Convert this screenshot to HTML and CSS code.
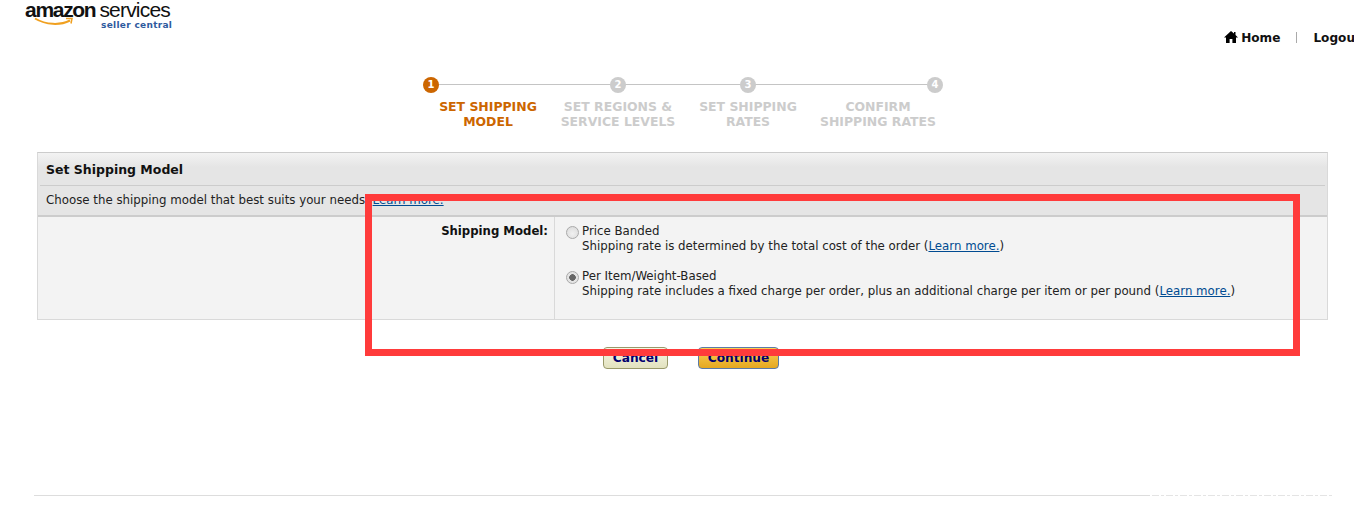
FILE: index.html
```html
<!DOCTYPE html>
<html lang="en">
<head>
<meta charset="utf-8">
<title>Set Shipping Model</title>
<link rel="stylesheet" href="styles.css">
</head>
<body>
<header class="top">
  <div class="logo">
    <div class="logo-main"><span class="logo-amazon">amazon</span><span class="logo-services">services</span></div>
    <svg class="logo-smile" width="50" height="10" viewBox="0 0 50 10"><path d="M1 1.5C12 8 26 8.6 36 3.5" fill="none" stroke="#f0a020" stroke-width="2"/><path d="M32 1.5L38 1.5 37 6.5" fill="none" stroke="#f0a020" stroke-width="1.5"/></svg>
    <div class="logo-sub">seller central</div>
  </div>
  <nav class="nav">
    <a class="nav-link nav-home"><svg class="nav-icon" width="14" height="12" viewBox="0 0 14 12"><path d="M7 0L0 6.5h2V12h3.6V8h2.8v4H12V6.5h2L11.5 4V1H10v1.6z" fill="#000"/></svg>Home</a>
    <span class="nav-sep"></span>
    <a class="nav-link">Logou</a>
  </nav>
</header>

<ol class="steps">
  <li class="step step-active"><span class="dot">1</span><span class="step-label">SET SHIPPING<br>MODEL</span></li>
  <li class="step"><span class="dot">2</span><span class="step-label">SET REGIONS &amp;<br>SERVICE LEVELS</span></li>
  <li class="step"><span class="dot">3</span><span class="step-label">SET SHIPPING<br>RATES</span></li>
  <li class="step"><span class="dot">4</span><span class="step-label">CONFIRM<br>SHIPPING RATES</span></li>
</ol>

<section class="panel">
  <div class="panel-head">
    <h1 class="panel-title">Set Shipping Model</h1>
    <p class="panel-intro">Choose the shipping model that best suits your needs. <a class="link">Learn more.</a></p>
  </div>
  <div class="panel-body">
    <div class="field-label">Shipping Model:</div>
    <div class="field-options">
      <label class="option">
        <span class="radio"></span>
        <span class="option-text">Price Banded<br>Shipping rate is determined by the total cost of the order (<a class="link">Learn more.</a>)</span>
      </label>
      <label class="option">
        <span class="radio radio-on"></span>
        <span class="option-text">Per Item/Weight-Based<br>Shipping rate includes a fixed charge per order, plus an additional charge per item or per pound (<a class="link">Learn more.</a>)</span>
      </label>
    </div>
  </div>
</section>

<div class="actions">
  <button class="btn btn-cancel">Cancel</button>
  <button class="btn btn-continue">Continue</button>
</div>

<footer class="foot"><span class="foot-mark"></span></footer>

<div class="annotation"></div>
</body>
</html>
```

FILE: styles.css
```css
* { box-sizing: border-box; }
html, body { margin: 0; padding: 0; }
body {
  position: relative;
  height: 510px;
  overflow: hidden;
  background: #fff;
  color: #111;
  font-family: "DejaVu Sans", Verdana, sans-serif;
  font-size: 11.8px;
  line-height: 15px;
}

.top { display: flex; justify-content: space-between; height: 70px; }
.logo { width: 180px; height: 30px; padding-left: 25px; position: relative; }
.logo-main { display: flex; align-items: baseline; gap: 4px; height: 20px; line-height: 19px; white-space: nowrap; font-family: "Liberation Sans", Arial, sans-serif; color: #111; }
.logo-amazon { font-size: 21px; font-weight: 700; letter-spacing: -1.3px; }
.logo-services { font-size: 21px; letter-spacing: -0.8px; }
.logo-smile { position: absolute; left: 34px; top: 17px; }
.logo-sub { margin: 0 0 0 76px; font-size: 9px; font-weight: 700; line-height: 10px; letter-spacing: 0.3px; color: #2f5a9e; white-space: nowrap; }

.nav { display: flex; align-items: center; height: 15px; margin: 30px -1px 0 0; font-size: 12.1px; font-weight: 700; line-height: 15px; }
.nav-link { display: flex; align-items: center; gap: 3px; padding-top: 1px; color: #111; }
.nav-icon { margin-top: -2px; }
.nav-sep { width: 1px; height: 11px; background: #aaa; margin: 0 16px; }

.steps { position: relative; display: grid; grid-template-columns: repeat(4, 130px); width: 520px; margin: 7px 0 0 423px; padding: 0; list-style: none; height: 75px; }
.steps::before { content: ""; position: absolute; left: 8px; right: 8px; top: 7px; height: 1px; background: #c4c4c4; }
.step { position: relative; display: flex; flex-direction: column; align-items: center; }
.step:first-child { align-items: flex-start; }
.step:last-child { align-items: flex-end; }
.dot { width: 16px; height: 16px; border-radius: 50%; background: #ccc; color: #fff; font-size: 10px; font-weight: 700; line-height: 16px; text-align: center; }
.step-label { width: 130px; margin-top: 6px; font-size: 12.45px; font-weight: 700; text-align: center; color: #ccc; white-space: nowrap; }
.step-active .dot { background: #c60; }
.step-active .step-label { color: #c60; }

.panel { margin: 0 26px 0 37px; height: 168px; border: 1px solid #d9d9d9; border-top-color: #ccc; background: #f3f3f3; }
.panel-head { height: 64px; padding: 0 1px; background: linear-gradient(#f3f3f3, #e5e5e5 14px); border-bottom: 2px solid #ccc; }
.panel-title { height: 33px; margin: 0 1px; padding: 9px 0 0 6px; font-size: 12.5px; font-weight: 700; line-height: 15px; color: #111; border-bottom: 1px solid #ccc; }
.panel-intro { margin: 0; padding: 7px 0 0 7px; color: #222; }
.panel-body { display: flex; height: 102px; }
.field-label { width: 517px; padding: 7px 6px 0 0; text-align: right; font-size: 11.7px; font-weight: 700; border-right: 1px solid #d9d9d9; height: 100%; }
.field-options { padding: 7px 0 0 11px; }
.option { display: flex; gap: 3px; margin-bottom: 15px; color: #222; }
.radio { width: 13px; height: 13px; margin-top: 2px; border-radius: 50%; border: 1px solid #a9a9a9; background: radial-gradient(circle at 50% 60%, #f0f0f0, #d8d8d8); flex: none; }
.radio-on { background: radial-gradient(circle, #666 0 3px, #e4e4e4 3.6px); }
.link { color: #004b91; text-decoration: underline; }

.actions { display: flex; gap: 30px; margin: 27px 0 0 603px; }
.btn { height: 22px; padding: 0; border-radius: 4px; font-family: "DejaVu Sans", Verdana, sans-serif; font-size: 12.2px; font-weight: 700; line-height: 20px; color: #00006e; }
.btn-cancel { width: 65px; border: 1px solid #99996a; background: linear-gradient(#f6f6e4, #e2e2bf); }
.btn-continue { width: 81px; border: 1px solid #5a7aa8; background: linear-gradient(#fbcf55, #e5a820); }

.foot { display: flex; justify-content: flex-end; width: 1298px; height: 1px; margin: 126px 0 0 34px; background: #ddd; }
.foot-mark { width: 182px; height: 1px; background: repeating-linear-gradient(90deg, #fff 0 2px, #e4e4e4 2px 9px, #fff 9px 11px, #e4e4e4 11px 14px); }

.annotation { position: absolute; left: 365px; top: 194px; width: 935px; height: 162px; border: 7px solid #ff3b3b; }
```
